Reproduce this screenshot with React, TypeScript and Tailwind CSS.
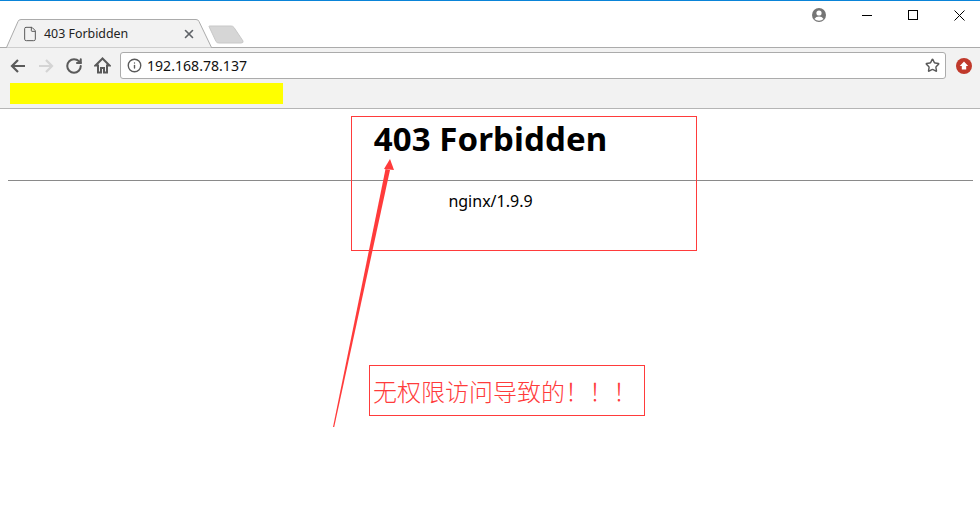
import { RotateCw, Info, Star, X, File } from 'lucide-react';

function TabStrip() {
    return (
        <div className="relative flex h-[46px] items-end justify-between bg-white">
            {/* tab + new tab shapes */}
            <svg className="absolute left-0 top-[-1px]" width="250" height="49" viewBox="0 0 250 49">
                <path d="M0 47.5H6.5L18 21.5Q18.7 19.5 21 19.5H196Q198.3 19.5 199 21.5L211.5 47.5H250" fill="#f2f2f2" stroke="#ababab" />
                <rect x="0" y="48" width="212" height="1" fill="#f2f2f2" />
                <path d="M209 26.5Q208.6 26 210 26H231Q233 26 234 27.5L243 41Q243.6 43 241 43H219Q217 43 216 41.5Z" fill="#d6d6d6" stroke="#c8c8c8" />
            </svg>
            <div className="relative flex h-[27px] w-[211px] items-center pl-[22px] pr-[15px] pt-[1px]">
                <File size={16} strokeWidth={1.5} className="text-[#5a5a5a]" />
                <span className="ml-[6px] flex-1 text-[12.4px] text-[#222]">403 Forbidden</span>
                <X size={14} strokeWidth={2.8} className="text-[#5f6368]" />
            </div>
            <div className="relative mr-[-2px] mt-[6px] flex items-center self-start">
                <svg width="16" height="16" viewBox="0 0 16 16" className="mr-[17px]">
                    <circle cx="8" cy="8" r="7" fill="#757575" />
                    <circle cx="8" cy="6" r="2.6" fill="#fff" />
                    <path d="M3.4 12Q5 9.6 8 9.6T12.6 12Q10.8 13.7 8 13.7T3.4 12Z" fill="#fff" />
                </svg>
                <div className="flex w-[46px] justify-center">
                    <svg width="10" height="10" viewBox="0 0 10 10"><path d="M0 5.5H10" stroke="#000" /></svg>
                </div>
                <div className="flex w-[46px] justify-center">
                    <svg width="10" height="10" viewBox="0 0 10 10"><rect x="0.5" y="0.5" width="9" height="9" fill="none" stroke="#000" /></svg>
                </div>
                <div className="flex w-[46px] justify-center">
                    <svg width="11" height="11" viewBox="0 0 11 11"><path d="M0.5 0.5L10.5 10.5M10.5 0.5L0.5 10.5" stroke="#000" /></svg>
                </div>
            </div>
        </div>
    );
}

function Toolbar() {
    return (
        <div className="flex h-[36px] items-center border-t border-[#ababab] bg-[#f2f2f2] pl-[4px] pr-[8px]">
            <div className="flex w-[28px] justify-center">
                <svg width="16" height="16" viewBox="0 0 16 16" fill="none" stroke="#5a5a5a" strokeWidth="2.2"><path d="M15 8H2M8 2L2 8L8 14" /></svg>
            </div>
            <div className="flex w-[28px] justify-center">
                <svg width="16" height="16" viewBox="0 0 16 16" fill="none" stroke="#d4d4d4" strokeWidth="2.2"><path d="M1 8H14M8 2L14 8L8 14" /></svg>
            </div>
            <div className="flex w-[28px] justify-center">
                <RotateCw size={18} strokeWidth={2.7} className="text-[#5a5a5a]" />
            </div>
            <div className="flex w-[28px] justify-center">
                <svg width="17" height="17" viewBox="0 0 17 17" fill="none" stroke="#5a5a5a" strokeWidth="2"><path d="M8.5 1.5L1.5 8.5H4V15.5H7V11H10V15.5H13V8.5H15.5Z" /></svg>
            </div>
            <div className="ml-[4px] flex h-[27px] w-[826px] items-center rounded-[3px] border border-[#ababab] bg-white pl-[6px] pr-[5px]">
                <Info size={15} strokeWidth={2.2} className="text-[#5a5a5a]" />
                <span className="ml-[5px] flex-1 text-[14.1px] text-[#111]">192.168.78.137</span>
                <Star size={15} strokeWidth={2.3} className="text-[#5a5a5a]" />
            </div>
            <svg width="16" height="16" viewBox="0 0 16 16" className="ml-[10px]">
                <circle cx="8" cy="8" r="8" fill="#c0392b" />
                <path d="M8 3.5L12.2 8H10.2V11.5H5.8V8H3.8Z" fill="#fff" />
            </svg>
        </div>
    );
}

export default function App() {
    return (
        <div className="relative h-[529px] w-[980px] overflow-hidden bg-white font-['Noto_Sans',sans-serif]">
            <div className="h-px bg-[#0a84d8]" />
            <TabStrip />
            <Toolbar />
            <div className="flex h-[26px] items-start border-b border-[#b5b5b5] bg-[#f2f2f2] pl-[10px]">
                <div className="h-[21px] w-[273px] bg-[#ffff00]" />
            </div>

            {/* page */}
            <div className="pl-[8px] pr-[7px] text-black">
                <h1 className="mt-[8px] text-center text-[33px] font-bold leading-[44px] tracking-[0.1px]">403 Forbidden</h1>
                <hr className="mt-[19px] border-t border-[#8a8a8a]" />
                <p className="mt-[10px] text-center text-[16px] leading-[21px]">nginx/1.9.9</p>
            </div>

            {/* annotations */}
            <div className="absolute left-[351px] top-[116px] h-[135px] w-[346px] border border-[#ff3b3b]" />
            <svg className="absolute left-[325px] top-[150px]" width="80" height="280" viewBox="0 0 80 280">
                <path d="M8 277L9.2 277L65 20L60.5 19Z" fill="#ff3b3b" />
                <path d="M65 9L69 20L59 19Z" fill="#ff3b3b" />
            </svg>
            <div className="absolute left-[369px] top-[365px] flex h-[51px] w-[276px] items-center border border-[#ff3b3b] pl-[3px]">
                <span className="whitespace-nowrap font-['Noto_Sans_CJK_SC',sans-serif] text-[24px] font-light text-[#ff3b3b]">无权限访问导致的！！！</span>
            </div>
        </div>
    );
}
